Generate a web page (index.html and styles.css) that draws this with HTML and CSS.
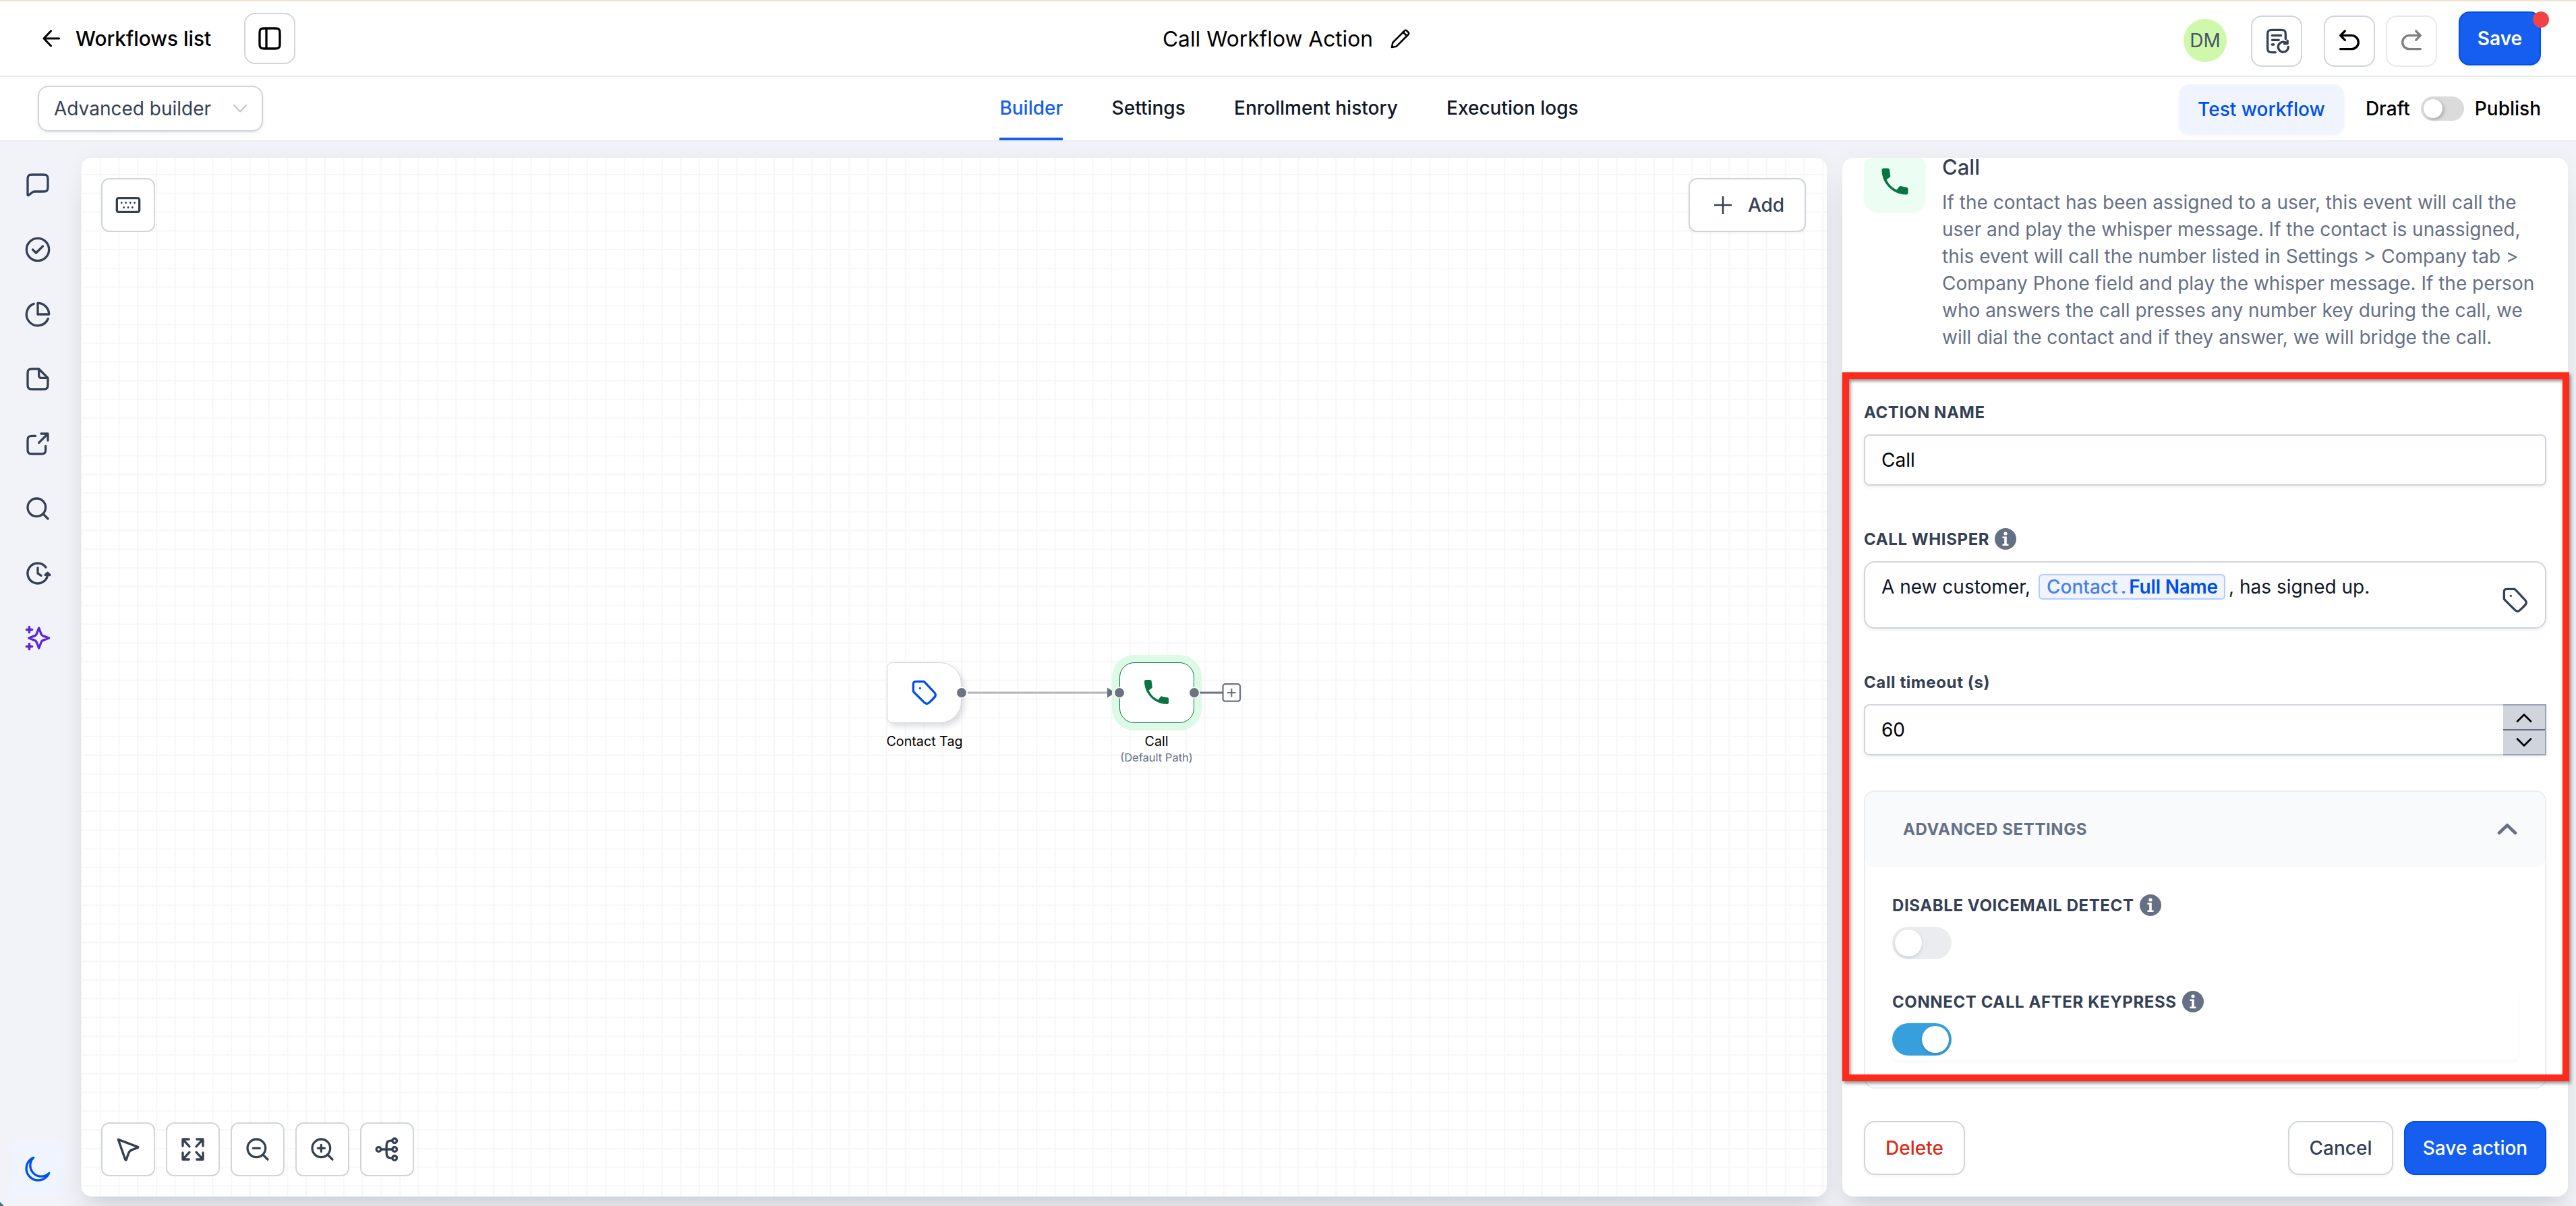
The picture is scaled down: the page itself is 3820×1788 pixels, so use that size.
FILE: index.html
```html
<!DOCTYPE html>
<html lang="en">
<head>
<meta charset="utf-8">
<title>Call Workflow Action</title>
<link rel="stylesheet" href="styles.css">
</head>
<body>
<svg class="defs" width="0" height="0">
  <symbol id="phone" viewBox="0 0 24 24"><path fill="currentColor" d="M4.100 3h3.200c.5 0 .9.4 1 .9l.6 4.300c0 .4-.1.700-.4.900L6.300 10.700c1.500 3.300 3.700 5.500 7 7l1.600-2.100c.2-.3.600-.5 1-.4l4.200.8c.5.1.9.5.9 1v2.900c0 .6-.5 1.100-1.100 1.100C10.600 21 3 13.400 3 4.100 3 3.500 3.500 3 4.100 3z"/></symbol>
  <symbol id="tag" viewBox="0 0 24 24"><path d="M8 8h.01M2 5.200v4.475c0 .489 0 .733.055.964.049.204.130.399.240.578.123.201.296.374.642.720l7.669 7.669c1.188 1.188 1.782 1.782 2.467 2.005a3 3 0 0 0 1.854 0c.685-.223 1.279-.817 2.467-2.005l2.212-2.212c1.188-1.188 1.782-1.782 2.005-2.467a3 3 0 0 0 0-1.854c-.223-.685-.817-1.279-2.005-2.467L12.437 2.937c-.346-.346-.519-.519-.720-.642a2 2 0 0 0-.578-.240C10.908 2 10.664 2 10.175 2H5.200c-1.120 0-1.680 0-2.108.218a2 2 0 0 0-.874.874C2 3.520 2 4.080 2 5.200Z"/></symbol>
  <symbol id="info" viewBox="0 0 32 32"><circle cx="16" cy="16" r="16" fill="#667085"/><circle cx="16" cy="8" r="2.600" fill="#fff"/><path fill="#fff" d="M11.500 12.500h6.300v11h2.700v2.500h-9v-2.500h2.700V15h-2.700z"/></symbol>
</svg>

<header class="topbar">
  <div class="topbar-left">
    <svg class="icon back" viewBox="0 0 26 26"><path d="M24.500 13H2M12.500 2 2 13l10.500 11"/></svg>
    <span class="list-title">Workflows list</span>
    <button class="square"><svg class="icon i40" viewBox="0 0 24 24"><path d="M9 3v18M7.800 3h8.400c1.680 0 2.520 0 3.160.330a3 3 0 0 1 1.310 1.310C21 5.280 21 6.120 21 7.800v8.400c0 1.680 0 2.520-.330 3.160a3 3 0 0 1-1.310 1.310c-.640.330-1.480.330-3.160.330H7.800c-1.680 0-2.520 0-3.160-.330a3 3 0 0 1-1.310-1.310C3 18.720 3 17.880 3 16.200V7.800c0-1.680 0-2.520.330-3.160a3 3 0 0 1 1.310-1.310C5.280 3 6.120 3 7.800 3Z"/></svg></button>
  </div>
  <div class="topbar-title">
    <span>Call Workflow Action</span>
    <svg class="icon pencil" viewBox="0 0 30 30"><path d="m18.500 5.500 6 6M2 28l1.300-6.800L21 3.500a2 2 0 0 1 3 0L26.500 6a2 2 0 0 1 0 3L9 26.700z"/></svg>
  </div>
  <div class="topbar-right">
    <span class="avatar">DM</span>
    <button class="square report"><svg class="icon i40" viewBox="0 0 24 24"><path d="M20 10V6.800c0-1.680 0-2.520-.330-3.160a3 3 0 0 0-1.310-1.310C17.720 2 16.880 2 15.200 2H8.800c-1.680 0-2.520 0-3.160.330a3 3 0 0 0-1.310 1.310C4 4.280 4 5.120 4 6.800v10.400c0 1.680 0 2.520.330 3.160a3 3 0 0 0 1.310 1.310c.640.330 1.480.330 3.160.330H11M8 7h8M8 11h6M8 15h1.500M22.400 17a4.500 4.500 0 1 1-2.400-3.800l1.500.8M21.700 11.500V14.300h-2.800"/></svg></button>
    <button class="square"><svg class="icon i40" viewBox="0 0 24 24"><path d="M4 7h10a6 6 0 0 1 0 12H4M4 7l4-4M4 7l4 4"/></svg></button>
    <button class="square faded"><svg class="icon i40" viewBox="0 0 24 24"><path d="M20 7H10a6 6 0 0 0 0 12h10M20 7l-4-4M20 7l-4 4"/></svg></button>
    <button class="btn primary save">Save<i class="dot"></i></button>
  </div>
</header>

<nav class="subbar">
  <div class="select">Advanced builder<svg class="icon" viewBox="0 0 20 12" width="20" height="12"><path d="m1 1 9 9.500L19 1"/></svg></div>
  <div class="tabs">
    <a class="active">Builder</a><a>Settings</a><a>Enrollment history</a><a>Execution logs</a>
  </div>
  <div class="publish">
    <button class="test">Test workflow</button>
    <span class="draft">Draft</span><span class="toggle small"><i></i></span><span class="pub">Publish</span>
  </div>
</nav>

<main class="workspace">
  <aside class="rail">
    <svg class="icon i40" viewBox="0 0 24 24"><path d="M3 7.800c0-1.680 0-2.520.330-3.160a3 3 0 0 1 1.310-1.310C5.280 3 6.120 3 7.800 3h8.400c1.680 0 2.520 0 3.160.330a3 3 0 0 1 1.310 1.310c.330.640.330 1.480.330 3.160v5.400c0 1.680 0 2.520-.330 3.160a3 3 0 0 1-1.310 1.310c-.640.330-1.480.330-3.160.330H9.680c-.620 0-.930 0-1.230.060a3 3 0 0 0-.760.270c-.270.130-.510.330-.990.710l-2.370 1.900c-.420.330-.620.500-.800.500-.350 0-.530-.300-.530-1.040z"/></svg>
    <svg class="icon i40" viewBox="0 0 24 24"><circle cx="12" cy="12" r="10"/><path d="m7.500 12 3 3 6-6"/></svg>
    <svg class="icon i40" viewBox="0 0 24 24"><path d="M8.500 2.640A10 10 0 1 0 21.200 15.900M12 2v10h10A10 10 0 0 0 12 2Z"/></svg>
    <svg class="icon i40" viewBox="0 0 24 24"><path d="M13 3H7.800c-1.680 0-2.520 0-3.160.330a3 3 0 0 0-1.310 1.310C3 5.280 3 6.120 3 7.800v8.400c0 1.680 0 2.520.330 3.160a3 3 0 0 0 1.310 1.310c.640.330 1.480.330 3.160.330h8.400c1.680 0 2.520 0 3.160-.330a3 3 0 0 0 1.310-1.310c.330-.640.330-1.480.330-3.160V11zM13 3v4.800c0 1.120 0 1.680.220 2.110a2 2 0 0 0 .870.870c.430.220.990.220 2.110.220H21"/></svg>
    <svg class="icon i40" viewBox="0 0 24 24"><path d="M21 9V3h-6M21 3l-8 8M10 5H7.800c-1.680 0-2.520 0-3.160.330a3 3 0 0 0-1.310 1.310C3 7.280 3 8.120 3 9.800v6.400c0 1.680 0 2.520.330 3.160a3 3 0 0 0 1.310 1.310c.640.330 1.480.330 3.160.330h6.400c1.680 0 2.520 0 3.160-.330a3 3 0 0 0 1.310-1.310c.330-.640.330-1.480.330-3.160V14"/></svg>
    <svg class="icon i40" viewBox="0 0 24 24"><circle cx="11" cy="11" r="8"/><path d="m21 21-4.200-4.200"/></svg>
    <svg class="icon i40" viewBox="0 0 24 24"><path d="m22.700 13.500-2-2-2 2M20.950 12A9 9 0 1 1 19.200 6.650M12 7v5l3 2"/></svg>
    <svg class="icon i40 violet" viewBox="0 0 24 24"><path d="M4.500 22v-5M4.500 7V2M2 4.500h5M2 19.500h5M13 3l-1.730 4.510c-.280.730-.420 1.100-.640 1.410-.200.270-.440.510-.710.710-.310.220-.680.360-1.410.640L4 12l4.510 1.730c.730.280 1.100.420 1.410.640.270.200.510.440.710.710.220.310.360.680.640 1.410L13 21l1.730-4.510c.280-.730.420-1.100.640-1.410.200-.270.440-.510.710-.710.310-.220.680-.360 1.410-.640L22 12l-4.510-1.730c-.730-.280-1.100-.420-1.410-.640a3 3 0 0 1-.710-.710c-.220-.310-.360-.680-.640-1.410z"/></svg>
    <span class="moon"><svg class="icon i40" viewBox="0 0 24 24"><path d="M22 15.840A8.500 8.500 0 0 1 8.160 2 10.500 10.500 0 1 0 22 15.840Z"/></svg></span>
  </aside>

  <section class="canvas">
    <div class="tools">
      <button class="tool"><svg class="icon i40" viewBox="0 0 24 24"><path d="M3.500 5.800h17A1.500 1.500 0 0 1 22 7.300v9.400a1.500 1.500 0 0 1-1.500 1.500h-17A1.500 1.500 0 0 1 2 16.700V7.300a1.500 1.500 0 0 1 1.500-1.500Z"/><path class="keys" d="M6.200 9.800v.3M10 9.800v.3M14 9.800v.3M17.800 9.800v.3M8.200 14v.3M12 14v.3M15.800 14v.3"/></svg></button>
      <button class="btn add"><svg class="icon" width="26" height="26" viewBox="0 0 26 26"><path d="M13 1v24M1 13h24"/></svg>Add</button>
    </div>
    <div class="tools bottom">
      <button class="tool"><svg class="icon i40" viewBox="0 0 24 24"><path d="M3.200 3.200 20.500 9.800a.4.4 0 0 1 0 .8l-5 1.800a5.500 5.500 0 0 0-3.200 3.200L10.400 21.200a.5.5 0 0 1-.9 0z"/></svg></button>
      <button class="tool"><svg class="icon i40" viewBox="0 0 24 24"><path d="M8.500 3H3v6M3 3l6 6.500M15.500 3H21v6M21 3l-6 6.500M3 15v6h5.500M3 21l6-6.500M21 15v6h-5.500M21 21l-6-6.500"/></svg></button>
      <button class="tool"><svg class="icon i40" viewBox="0 0 24 24"><circle cx="11" cy="11" r="8"/><path d="m21 21-4.200-4.200M8 11h6"/></svg></button>
      <button class="tool"><svg class="icon i40" viewBox="0 0 24 24"><circle cx="11" cy="11" r="8"/><path d="m21 21-4.200-4.200M8 11h6M11 8v6"/></svg></button>
      <button class="tool"><svg class="icon i40" viewBox="0 0 24 24"><circle cx="4.500" cy="12" r="2"/><circle cx="18.700" cy="4.300" r="2"/><circle cx="18.700" cy="12" r="2"/><circle cx="18.700" cy="19.700" r="2"/><path d="M6.500 12h10.200M16.700 4.300h-1.200c-2.500 0-4 1.500-4 4v7.400c0 2.500 1.500 4 4 4h1.200"/></svg></button>
    </div>

    <div class="node trigger"><svg class="icon i40" viewBox="0 0 24 24"><use href="#tag"/></svg></div>
    <div class="node call"><svg width="48" height="48"><use href="#phone"/></svg></div>
    <svg class="edges" width="550" height="40" viewBox="0 0 550 40">
      <path d="M130 20h212" stroke="#b0b3ba" stroke-width="3"/>
      <path d="M337 12.500 344 17v6l-7 4.500z" fill="#6b7280"/>
      <path d="M466 20h42" stroke="#6b7280" stroke-width="3"/>
      <g fill="#6b7280" stroke="#fff" stroke-width="1.500"><circle cx="121" cy="20" r="7.700"/><circle cx="355" cy="20" r="7.700"/><circle cx="466" cy="20" r="7.700"/></g>
      <rect x="508.500" y="7.200" width="25.500" height="25.500" rx="3.500" fill="#fff" stroke="#6b7280" stroke-width="2.200"/>
      <path d="M515 20h12.500M521.250 13.700v12.600" stroke="#6b7280" stroke-width="2.200"/>
    </svg>
    <div class="caption one">Contact Tag</div>
    <div class="caption two">Call<small>(Default Path)</small></div>
  </section>

  <section class="panel">
    <div class="scroll">
      <div class="intro">
        <span class="badge"><svg width="52" height="52"><use href="#phone"/></svg></span>
        <div>
          <h2>Call</h2>
          <p>If the contact has been assigned to a user, this event will call the<br>user and play the whisper message. If the contact is unassigned,<br>this event will call the number listed in Settings &gt; Company tab &gt;<br>Company Phone field and play the whisper message. If the person<br>who answers the call presses any number key during the call, we<br>will dial the contact and if they answer, we will bridge the call.</p>
        </div>
      </div>
      <div class="field">
        <label>ACTION NAME</label>
        <div class="input">Call</div>
      </div>
      <div class="field">
        <label>CALL WHISPER<svg width="32" height="32"><use href="#info"/></svg></label>
        <div class="input area"><span class="before">A new customer,</span><span class="chip"><span>Contact</span><em>.</em><b>Full Name</b></span><span class="after">, has signed up.</span><svg class="icon i40 tagbtn" viewBox="0 0 24 24"><use href="#tag"/></svg></div>
      </div>
      <div class="field">
        <label>Call timeout (s)</label>
        <div class="input number"><span>60</span><div class="spin"><i><svg class="icon" width="24" height="14" viewBox="0 0 24 14"><path d="m2 12.500 10-10 10 10"/></svg></i><i><svg class="icon" width="24" height="14" viewBox="0 0 24 14"><path d="m2 1.500 10 10 10-10"/></svg></i></div></div>
      </div>
      <div class="advanced">
        <div class="adv-head">ADVANCED SETTINGS<svg class="icon" width="30" height="18" viewBox="0 0 30 18"><path d="m3 15 12-11.500L27 15"/></svg></div>
        <div class="option">
          <label>DISABLE VOICEMAIL DETECT<svg width="32" height="32"><use href="#info"/></svg></label>
          <span class="toggle"><i></i></span>
        </div>
        <div class="option shaded">
          <label>CONNECT CALL AFTER KEYPRESS<svg width="32" height="32"><use href="#info"/></svg></label>
          <span class="toggle on"><i></i></span>
        </div>
      </div>
    </div>
    <footer class="actions">
      <button class="btn delete">Delete</button>
      <button class="btn cancel">Cancel</button>
      <button class="btn primary action">Save action</button>
    </footer>
  </section>
</main>
<div class="highlight"></div>
<div class="corner"></div>
</body>
</html>
```

FILE: styles.css
```css
* { box-sizing: border-box; }
body {
  margin: 0;
  width: 3820px;
  height: 1788px;
  overflow: hidden;
  position: relative;
  background: #f2f3f8;
  font-family: Inter, "Liberation Sans", sans-serif;
  font-size: 28px;
  color: #000;
}
.defs { position: absolute; }
button { font: inherit; padding: 0; margin: 0; background: #fff; border: 0; }
svg { display: block; flex: none; }
.icon { fill: none; stroke: currentColor; stroke-width: 2; stroke-linecap: round; stroke-linejoin: round; }
.i40 { width: 40px; height: 40px; }

/* Header */
.topbar {
  height: 114px;
  background: #fff;
  border-top: 2px solid #f2e2cc;
  border-bottom: 2px solid #eaecf0;
  display: grid;
  grid-template-columns: 1fr auto 1fr;
}
.topbar-left { display: flex; align-items: center; padding-left: 63px; }
.back { width: 26px; height: 26px; stroke-width: 3; }
.list-title { font-size: 29.800px; font-weight: 500; width: 250px; margin-left: 23px; white-space: nowrap; }
.square {
  width: 76px; height: 76px;
  border: 2px solid #d0d5dd;
  border-radius: 16px;
  display: flex; align-items: center; justify-content: center;
}
.topbar-title { display: flex; align-items: center; gap: 26px; font-size: 31.700px; padding-right: 4px; }
.pencil { width: 30px; height: 30px; stroke-width: 2.600; }
.topbar-right { display: flex; justify-content: flex-end; align-items: flex-start; padding: 21px 52px 0 0; }
.avatar {
  width: 64px; height: 64px; margin: 5px 36px 0 0;
  border-radius: 50%; background: #d0f8ab; color: #475467;
  display: flex; align-items: center; justify-content: center;
}
.report { margin-right: 32px; color: #344054; }
.faded { opacity: .5; margin: 0 32px 0 16px; }
.btn {
  height: 80px;
  border: 2px solid #d0d5dd;
  border-radius: 16px;
  font-weight: 500;
  color: #344054;
  display: flex; align-items: center; justify-content: center;
  box-shadow: 0 2px 4px rgba(16, 24, 40, .05);
}
.btn.primary { background: #155eef; border-color: #004eeb; color: #fff; }
.save { width: 122px; margin-top: -6px; position: relative; font-weight: 600; }
.dot { position: absolute; top: -2px; right: -14px; width: 24px; height: 24px; border-radius: 50%; background: #f04444; }

/* Tab bar */
.subbar {
  height: 96px;
  background: #fff;
  border-bottom: 2px solid #eaecf0;
  display: grid;
  grid-template-columns: 1fr auto 1fr;
}
.select {
  width: 334px; height: 68px; margin: 13px 0 0 56px; padding: 0 22px;
  border: 2px solid #d0d5dd; border-radius: 16px;
  display: flex; align-items: center; justify-content: space-between;
  color: #344054; box-shadow: 0 2px 4px rgba(16, 24, 40, .1);
}
.select .icon { color: #c2c2c2; }
.tabs { display: flex; gap: 72.300px; padding-left: 3px; }
.tabs a { height: 94px; line-height: 92px; font-weight: 500; color: #101828; border-bottom: 4px solid transparent; }
.tabs .active { color: #155eef; border-color: #155eef; }
.publish { display: flex; align-items: center; justify-content: flex-end; padding: 0 52px 0 0; font-weight: 500; }
.test {
  width: 245px; height: 74px; border-radius: 16px; margin: 1px 32px 0 0;
  background: #eff4ff; color: #004eeb; font-weight: 500; box-shadow: 0 2px 4px rgba(16, 24, 40, .05);
}
.toggle { display: block; width: 88px; height: 48px; border-radius: 24px; padding: 4px; background: #eaecf0; }
.toggle i { display: block; width: 40px; height: 40px; border-radius: 50%; background: #fff; box-shadow: 0 2px 5px rgba(16, 24, 40, .15); }
.toggle.on { background: #37a0dc; }
.toggle.on i { margin-left: 40px; }
.toggle.small { width: 64px; height: 36px; background: #dbdbdb; margin: 0 16px; }
.toggle.small i { width: 28px; height: 28px; box-shadow: 2px 2px 5px rgba(0, 0, 0, .25); }

/* Workspace */
.workspace { display: flex; height: 1578px; padding: 24px 12px 14px 0; }
.rail {
  width: 120px; height: 1540px; padding: 20px 0 0;
  display: flex; flex-direction: column; align-items: center; gap: 56px;
  color: #344054;
}
.rail > .icon { margin-right: 8px; }
.rail .violet { color: #5925dc; }
.moon {
  width: 78px; height: 82px; margin: auto 8px 0 0; border-radius: 10px;
  background: #eff4ff; color: #004eeb;
  display: flex; align-items: center; justify-content: center;
}
.canvas, .panel {
  border-radius: 16px;
  background-color: #fff;
  box-shadow: 0 40px 48px -8px rgba(16, 24, 40, .09), 0 16px 16px -8px rgba(16, 24, 40, .04), 0 0 30px rgba(16, 24, 40, .04);
}
.canvas {
  position: relative;
  width: 2589px; height: 1540px;
  padding: 30px;
  display: flex; flex-direction: column; justify-content: space-between;
  background-image:
    linear-gradient(90deg, #f7f7f8 2px, transparent 2px),
    linear-gradient(#f7f7f8 2px, transparent 2px);
  background-size: 27.780px 27.780px;
  background-position: 0 24px;
  color: #344054;
}
.tools { display: flex; justify-content: space-between; }
.tools.bottom { justify-content: flex-start; gap: 16px; }
.tool {
  width: 80px; height: 80px; color: #344054;
  border: 2px solid #d0d5dd; border-radius: 12px;
  display: flex; align-items: center; justify-content: center;
}
.keys { stroke-width: 1.600; }
.add { width: 174px; gap: 24px; padding-left: 6px; margin-right: 1px; border-radius: 12px; }
.add .icon { stroke-width: 2.600; }

/* Diagram */
.node {
  position: absolute; top: 748px; width: 111px; height: 90px;
  background: #fff; display: flex; align-items: center; justify-content: center;
}
.trigger {
  left: 1195px; border: 1.500px solid #d0d5dd; border-radius: 8px 32px 32px 8px;
  color: #004eeb; box-shadow: 4px 5px 8px rgba(16, 24, 40, .14);
}
.node.call { left: 1540px; padding: 0 1px 3px 0; border: 1.500px solid #087443; border-radius: 22px; color: #087443; box-shadow: 0 0 0 11px #dcfae6; }
.edges { position: absolute; left: 1185px; top: 773px; }
.caption { position: absolute; top: 853px; width: 240px; text-align: center; font-size: 19.700px; line-height: 24px; color: #000; }
.caption small { display: block; font-size: 16.500px; color: #667085; }
.caption.one { left: 1131px; }
.caption.two { left: 1475px; }

/* Side panel */
.panel { width: 1076px; height: 1540px; margin-left: 23px; position: relative; display: flex; flex-direction: column; }
.scroll { height: 1396px; padding: 0 32px; }
.intro { display: flex; gap: 24px; height: 359px; }
.badge { width: 92px; height: 82px; padding-bottom: 12px; border-radius: 12px 12px 22px 22px; background: #ecfdf3; color: #087443; display: flex; align-items: center; justify-content: center; }
.intro h2 { margin: -1px 0 17px; font-size: 31px; line-height: 30px; font-weight: 500; color: #344054; }
.intro p { margin: 0; line-height: 40px; color: #667085; white-space: nowrap; }
label { display: flex; align-items: center; gap: 8px; height: 36px; font-size: 24px; letter-spacing: .6px; font-weight: 700; color: #344054; }
.field { margin-bottom: 61px; }
.input {
  margin-top: 15px; height: 76px; padding: 0 24px;
  border: 2px solid #d0d5dd; border-radius: 8px;
  display: flex; align-items: center;
  box-shadow: 0 2px 4px rgba(16, 24, 40, .08);
}
.area { height: 100px; border-radius: 16px; align-items: flex-start; padding-top: 17px; line-height: 38px; color: #101828; white-space: nowrap; }
.before { width: 233px; }
.chip {
  width: 277px; height: 38px; line-height: 34px; padding: 0 9px 0 10px; margin-right: 5px;
  border: 2px solid #b2ccff; border-radius: 6px; background: #eff4ff; color: #4a80e8;
  display: flex; justify-content: space-between; font-weight: 500;
}
.chip em { font-style: normal; }
.chip b { color: #004eeb; font-weight: 600; letter-spacing: -.2px; }
.tagbtn { margin: 19px 0 0 auto; color: #344054; }
.number { justify-content: space-between; padding-right: 0; }
.spin { width: 64px; height: 76px; margin-right: -2px; background: #d0d5dd; border: 2px solid #98a2b3; border-left: 0; display: flex; flex-direction: column; }
.spin i { flex: 1; display: flex; align-items: center; justify-content: center; }
.spin i + i { border-top: 2px solid #667085; }
.spin .icon { stroke-width: 2.600; }
.advanced { margin-top: -9px; height: 442px; border: 2px solid #eaecf0; border-radius: 16px; }
.adv-head {
  height: 112px; padding: 0 41px 2px 56px; margin-bottom: 38px; border-radius: 14px; background: #f9fafc;
  display: flex; align-items: center; justify-content: space-between;
  font-size: 24px; letter-spacing: .6px; font-weight: 650; color: #667085;
}
.adv-head .icon { stroke-width: 4.600; }
.option { margin: 0 40px 45px; }
.option .toggle { margin-top: 14px; }
.shaded { height: 105px; border-radius: 8px; box-shadow: 0 2px 4px rgba(16, 24, 40, .04); }
.actions { display: flex; gap: 16px; padding: 32px 32px 0; }
.delete { width: 150px; color: #d92d20; margin-right: auto; }
.cancel { width: 156px; }
.action { width: 211px; }

/* Overlays */
.highlight {
  position: absolute; left: 2732px; top: 552px; width: 1078px; height: 1051px;
  border: 10px solid #ff2a1a;
  box-shadow: 2px 3px 5px rgba(0, 0, 0, .45), inset 2px 3px 5px rgba(0, 0, 0, .45);
}
.corner { position: absolute; left: 0; bottom: 0; width: 6px; height: 6px; background: #3f7776; clip-path: polygon(0 0, 100% 100%, 0 100%); }
```
